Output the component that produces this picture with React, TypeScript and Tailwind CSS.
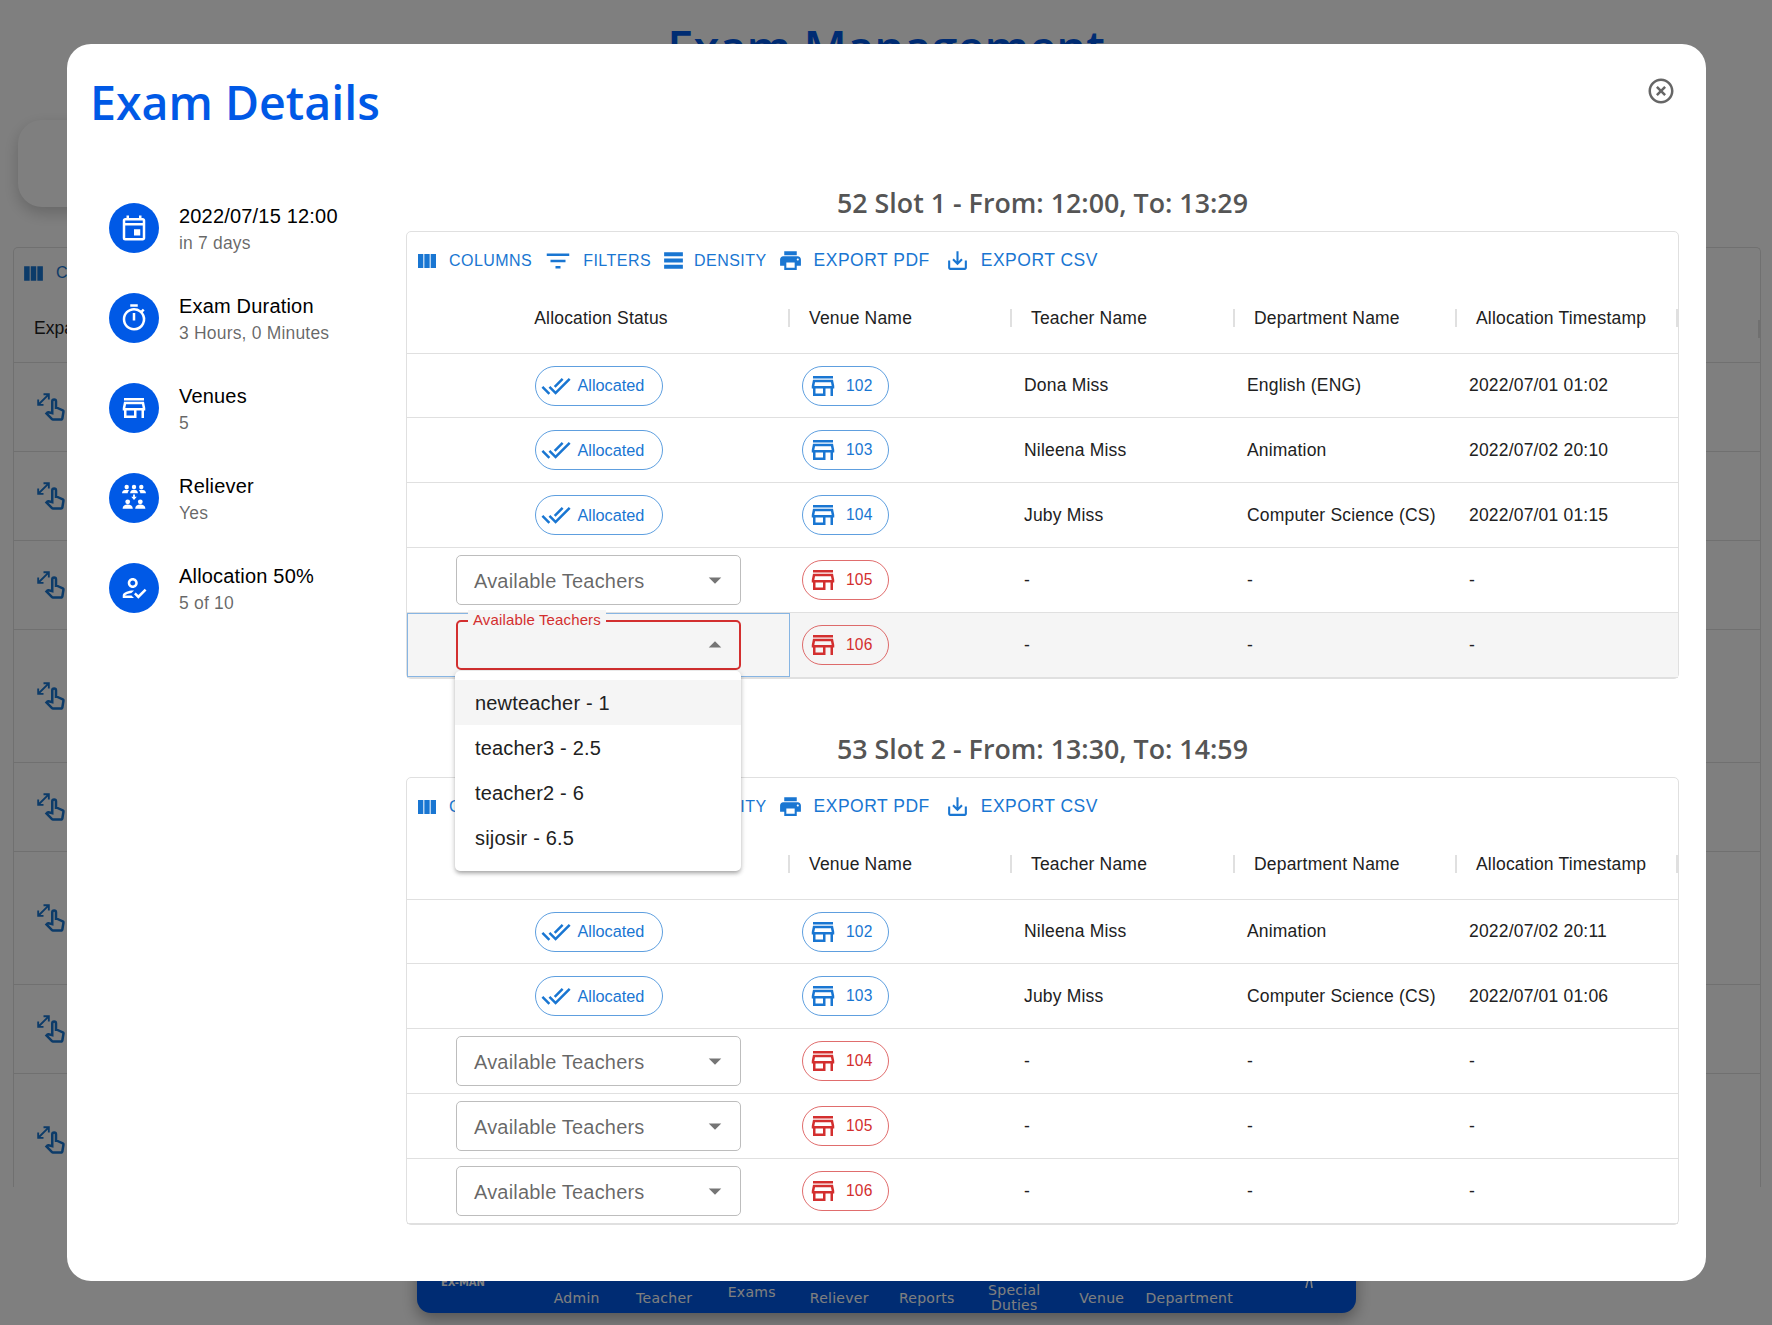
import type { ReactNode } from "react";
import {
  MdArrowDropDown,
  MdArrowDropUp,
  MdDoneAll,
  MdFilterList,
  MdHighlightOff,
  MdOutlineEvent,
  MdOutlineHowToReg,
  MdOutlinePinch,
  MdOutlineStore,
  MdOutlineTimer,
  MdPrint,
  MdSaveAlt,
  MdTableRows,
  MdViewColumn,
} from "react-icons/md";

type Allocation = {
  venue: string;
  teacher?: string;
  department?: string;
  time?: string;
  open?: boolean;
};

const slotOne: Allocation[] = [
  { venue: "102", teacher: "Dona Miss", department: "English (ENG)", time: "2022/07/01 01:02" },
  { venue: "103", teacher: "Nileena Miss", department: "Animation", time: "2022/07/02 20:10" },
  { venue: "104", teacher: "Juby Miss", department: "Computer Science (CS)", time: "2022/07/01 01:15" },
  { venue: "105" },
  { venue: "106", open: true },
];

const slotTwo: Allocation[] = [
  { venue: "102", teacher: "Nileena Miss", department: "Animation", time: "2022/07/02 20:11" },
  { venue: "103", teacher: "Juby Miss", department: "Computer Science (CS)", time: "2022/07/01 01:06" },
  { venue: "104" },
  { venue: "105" },
  { venue: "106" },
];

const teachers = ["newteacher - 1", "teacher3 - 2.5", "teacher2 - 6", "sijosir - 6.5"];
const columns = ["Venue Name", "Teacher Name", "Department Name", "Allocation Timestamp"];
const pageRows = [false, false, false, true, false, true, false, true];
const navItems = ["Admin", "Teacher", "Exams", "Reliever", "Reports", "Special Duties", "Venue", "Department"];

function RelieverIcon() {
  return (
    <svg viewBox="-15 -15 30 30" className="h-[30px] w-[30px]" fill="currentColor">
      <circle cx="-7.3" cy="-11" r="2.2" />
      <circle cx="0" cy="-11" r="2.2" />
      <circle cx="7.3" cy="-11" r="2.2" />
      <path d="M-12 -4.8c0-2.3 2-3.4 4.6-3.4 1 0 1.9.2 2.6.6-1 .6-1.5 1.6-1.5 2.8zM12 -4.8c0-2.3-2-3.4-4.6-3.4-1 0-1.9.2-2.6.6 1 .6 1.5 1.6 1.5 2.8zM-3.9 -4.8c0-2.3 1.7-3.4 3.9-3.4s3.9 1.1 3.9 3.4z" />
      <path d="M-.9 -3.6h1.8v2.4h1.9L0 2-2.8 -1.2h1.9z" />
      <circle cx="-6.3" cy="3.8" r="2.4" />
      <circle cx="6.3" cy="3.8" r="2.4" />
      <path d="M-11.4 10.8c0-2.8 2.3-4.2 5.1-4.2s5.1 1.4 5.1 4.2zM1.2 10.8c0-2.8 2.3-4.2 5.1-4.2s5.1 1.4 5.1 4.2z" />
    </svg>
  );
}

function SummaryItem({ icon, title, sub }: { icon: ReactNode; title: string; sub: string }) {
  return (
    <div className="flex h-[90px] items-center gap-5">
      <div className="flex h-[50px] w-[50px] items-center justify-center rounded-full bg-[#0059e6] text-white">
        {icon}
      </div>
      <div className="pt-[2px]">
        <p className="text-[20px] leading-[28px] tracking-[0.00938em] text-black">{title}</p>
        <p className="text-[17.5px] leading-[26px] tracking-[0.01071em] text-black/60">{sub}</p>
      </div>
    </div>
  );
}

function Toolbar() {
  return (
    <div className="flex h-[50px] items-center pl-[8px] pt-[7px] text-[#1976d2]">
      <MdViewColumn size={24} />
      <span className="ml-[10px] text-[16px] tracking-[0.02857em]">COLUMNS</span>
      <MdFilterList size={30} className="ml-[11px]" />
      <span className="ml-[10px] text-[16px] tracking-[0.02857em]">FILTERS</span>
      <MdTableRows size={25} className="ml-[10px]" />
      <span className="ml-[8px] text-[16px] tracking-[0.02857em]">DENSITY</span>
      <MdPrint size={25} className="ml-[11px]" />
      <span className="ml-[11px] text-[17.5px] tracking-[0.02857em]">EXPORT PDF</span>
      <MdSaveAlt size={25} className="ml-[15px]" />
      <span className="ml-[11px] text-[17.5px] tracking-[0.02857em]">EXPORT CSV</span>
    </div>
  );
}

function HeaderRow() {
  return (
    <div className="grid h-[72px] grid-cols-[383px_222px_223px_222px_221px] border-b border-[#e0e0e0] pt-[1px] text-[17.5px] tracking-[0.01071em] text-[#212121]">
      <div className="flex items-center">
        <span className="flex-1 pl-[7px] text-center">Allocation Status</span>
        <span className="h-[18px] w-[2px] bg-[#e0e0e0]" />
      </div>
      {columns.map((column) => (
        <div key={column} className="flex items-center">
          <span className="flex-1 pl-[19px]">{column}</span>
          <span className="h-[18px] w-[2px] bg-[#e0e0e0]" />
        </div>
      ))}
    </div>
  );
}

function VenueChip({ venue, allocated }: { venue: string; allocated: boolean }) {
  return (
    <span
      className={
        allocated
          ? "flex h-[40px] w-[87px] items-center rounded-full border border-[#1976d2]/70 pl-[5px] text-[#1976d2]"
          : "flex h-[40px] w-[87px] items-center rounded-full border border-[#d32f2f]/70 pl-[5px] text-[#d32f2f]"
      }
    >
      <MdOutlineStore size={30} />
      <span className="ml-[8px] text-[15.6px]">{venue}</span>
    </span>
  );
}

function TeacherSelect() {
  return (
    <div className="flex h-[50px] w-[285px] items-center justify-between rounded-[5px] border border-[#bdbdbd] pl-[17px] pr-[10px] text-[20px] text-black/60">
      <span className="mt-[1px] tracking-[0.00938em]">Available Teachers</span>
      <MdArrowDropDown size={30} className="text-[#757575]" />
    </div>
  );
}

function OpenSelect() {
  return (
    <div className="relative flex h-[50px] w-[285px] items-center justify-end rounded-[5px] border-2 border-[#d32f2f] pr-[9px]">
      <span className="absolute left-[10px] top-[-12px] bg-[#f5f5f5] px-[5px] text-[15px] leading-[20px] tracking-[0.00938em] text-[#d32f2f]">
        Available Teachers
      </span>
      <MdArrowDropUp size={30} className="text-[#757575]" />
    </div>
  );
}

function TeacherMenu() {
  return (
    <div className="absolute left-[48px] top-[58px] z-10 w-[286px] rounded-[5px] bg-white pb-[11px] pt-[9px] text-[20px] tracking-[0.00938em] text-[#212121] shadow-[0_3px_4px_-1px_rgba(0,0,0,0.3),0_1px_6px_rgba(0,0,0,0.14)]">
      {teachers.map((teacher, index) => (
        <div
          key={teacher}
          className={index === 0 ? "flex h-[45px] items-center bg-[#f5f5f5] pl-5" : "flex h-[45px] items-center pl-5"}
        >
          {teacher}
        </div>
      ))}
    </div>
  );
}

function AllocationRow({ row, first }: { row: Allocation; first: boolean }) {
  const allocated = Boolean(row.teacher);
  return (
    <div
      className={clsx(
        "grid grid-cols-[383px_222px_223px_222px_221px] border-b border-[#e0e0e0] text-[17.5px] tracking-[0.01071em] text-[#212121]",
        first ? "h-[64px]" : "h-[65px]",
        row.open && "bg-[#f5f5f5]",
      )}
    >
      <div
        className={
          row.open
            ? "relative flex items-center justify-center outline outline-1 -outline-offset-1 outline-[#1976d2]/50"
            : "flex items-center justify-center"
        }
      >
        {allocated && (
          <span className="flex h-[40px] w-[128px] items-center rounded-full border border-[#1976d2]/70 pl-[5px] text-[16.25px] tracking-normal text-[#1976d2]">
            <MdDoneAll size={30} />
            <span className="ml-[7px]">Allocated</span>
          </span>
        )}
        {!allocated && !row.open && <TeacherSelect />}
        {row.open && <OpenSelect />}
        {row.open && <TeacherMenu />}
      </div>
      <div className="flex items-center pl-3">
        <VenueChip venue={row.venue} allocated={allocated} />
      </div>
      <div className="flex items-center pl-3">{row.teacher ?? "-"}</div>
      <div className="flex items-center pl-3">{row.department ?? "-"}</div>
      <div className="flex items-center pl-3">{row.time ?? "-"}</div>
    </div>
  );
}

function SlotTable({ title, rows, className }: { title: string; rows: Allocation[]; className?: string }) {
  return (
    <section className={className}>
      <h2 className="flex h-[51px] items-center justify-center pb-[5px] font-['Open_Sans',sans-serif] text-[26.8px] font-semibold text-[#555555]">
        {title}
      </h2>
      <div className="rounded-[5px] border border-[#e0e0e0]">
        <Toolbar />
        <HeaderRow />
        {rows.map((row, index) => (
          <AllocationRow key={row.venue} row={row} first={index === 0} />
        ))}
      </div>
    </section>
  );
}

function BackgroundPage() {
  return (
    <div>
      <h1 className="pt-[9px] text-center font-['Open_Sans',sans-serif] text-[47px] font-semibold leading-[76px] text-[#0059e6]">
        Exam Management
      </h1>
      <div className="ml-[18px] mt-[35px] h-[87px] w-[1390px] rounded-[24px] bg-white shadow-[0_6px_16px_rgba(0,0,0,0.2)]" />
      <div className="ml-[13px] mt-[40px] h-[940px] w-[1748px] overflow-hidden rounded-t-[5px] border-x border-t border-[#e0e0e0]">
        <div className="flex h-[50px] items-center pl-[7px] text-[#1976d2]">
          <MdViewColumn size={25} />
          <span className="ml-[10px] text-[16px] tracking-[0.02857em]">COLUMNS</span>
        </div>
        <div className="flex h-[65px] items-center justify-between border-b border-[#e0e0e0] pb-[3px] pl-[20px] text-[17.5px] text-[#212121]">
          <span>Expand</span>
          <span className="h-[18px] w-[2px] bg-[#e0e0e0]" />
        </div>
        {pageRows.map((tall, index) => (
          <div
            key={index}
            className={
              tall
                ? "flex h-[133px] items-center border-b border-[#e0e0e0] pl-[22px] text-[#1976d2]"
                : "flex h-[89px] items-center border-b border-[#e0e0e0] pl-[22px] text-[#1976d2]"
            }
          >
            <MdOutlinePinch size={30} />
          </div>
        ))}
      </div>
      <nav className="absolute left-[417px] top-[1200px] flex h-[113px] w-[939px] items-end rounded-b-[14px] bg-[#0059e6] font-['DejaVu_Sans',sans-serif] text-[14px] tracking-[0.02em] text-white shadow-[0_6px_16px_rgba(0,0,0,0.35)]">
        <div className="flex h-[30px] w-full items-center pl-[24px]">
          <span className="-mt-[30px] w-[92px] text-[10px] font-bold leading-[12px] tracking-normal">EX-MAN</span>
          {navItems.map((item) => (
            <span
              key={item}
              className={
                item === "Exams"
                  ? "-mt-[12px] w-[87.5px] text-center leading-[15px]"
                  : "w-[87.5px] text-center leading-[15px]"
              }
            >
              {item}
            </span>
          ))}
          <svg viewBox="0 0 12 8" className="-mt-[28px] ml-[70px] h-[8px] w-[12px]" fill="none" stroke="currentColor" strokeWidth="1.6">
            <path d="M3 8 5 0M9 8 8 0" />
          </svg>
        </div>
      </nav>
    </div>
  );
}

export default function App() {
  return (
    <div className="relative h-[1325px] w-[1772px] overflow-hidden bg-white font-['Liberation_Sans',Arial,sans-serif]">
      <BackgroundPage />
      <div className="absolute inset-0 bg-black/50">
        <div className="ml-[67px] mt-[44px] h-[1237px] w-[1639px] rounded-[24px] bg-white">
          <header className="flex h-[136px] justify-between pl-[23px] pr-[30px]">
            <h1 className="pt-[18px] font-['Open_Sans',sans-serif] text-[46.5px] font-semibold leading-[80px] text-[#0059e6]">
              Exam Details
            </h1>
            <MdHighlightOff size={30} className="mt-[32px] text-[#666666]" />
          </header>
          <div className="flex">
            <aside className="w-[339px] pl-[42px] pt-[3px]">
              <SummaryItem icon={<MdOutlineEvent size={30} />} title="2022/07/15 12:00" sub="in 7 days" />
              <SummaryItem icon={<MdOutlineTimer size={30} />} title="Exam Duration" sub="3 Hours, 0 Minutes" />
              <SummaryItem icon={<MdOutlineStore size={30} />} title="Venues" sub="5" />
              <SummaryItem icon={<RelieverIcon />} title="Reliever" sub="Yes" />
              <SummaryItem icon={<MdOutlineHowToReg size={30} />} title="Allocation 50%" sub="5 of 10" />
            </aside>
            <main className="w-[1273px]">
              <SlotTable title="52 Slot 1 - From: 12:00, To: 13:29" rows={slotOne} />
              <SlotTable title="53 Slot 2 - From: 13:30, To: 14:59" rows={slotTwo} className="mt-[47px]" />
            </main>
          </div>
        </div>
      </div>
    </div>
  );
}

function clsx(...parts: Array<string | boolean | undefined>) {
  return parts.filter(Boolean).join(" ");
}
